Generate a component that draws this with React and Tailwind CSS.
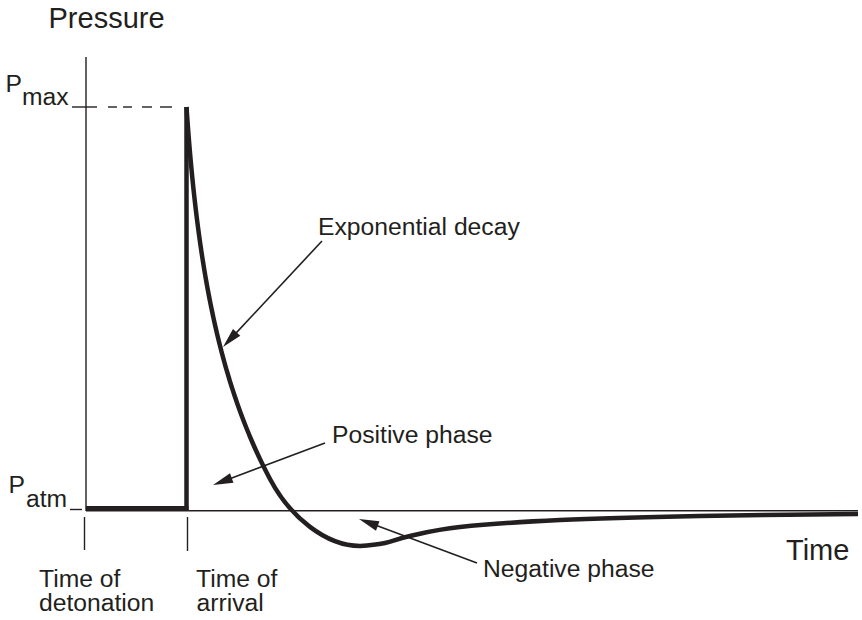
import React from "react";

const INK = "#231f20";

const K = 2.24;
const A = 101.5 / (Math.exp(K) - 1);
const decayX = (y) => 186.5 + A * (Math.exp((K * (y - 107)) / 403) - 1);

function catmullSegments(pts, before, after) {
  let d = "";
  for (let i = 0; i < pts.length - 1; i++) {
    const p0 = i === 0 ? before : pts[i - 1];
    const p1 = pts[i];
    const p2 = pts[i + 1];
    const p3 = i + 2 < pts.length ? pts[i + 2] : after;
    const c1 = [p1[0] + (p2[0] - p0[0]) / 6, p1[1] + (p2[1] - p0[1]) / 6];
    const c2 = [p2[0] - (p3[0] - p1[0]) / 6, p2[1] - (p3[1] - p1[1]) / 6];
    d += ` C${c1[0].toFixed(2)},${c1[1].toFixed(2)} ${c2[0].toFixed(2)},${c2[1].toFixed(2)} ${p2[0].toFixed(2)},${p2[1].toFixed(2)}`;
  }
  return d;
}

function buildCurve() {
  const decay = [];
  for (let y = 107; y <= 480; y += 8) decay.push([decayX(y), y]);
  if (decay[decay.length - 1][1] !== 480) decay.push([decayX(480), 480]);
  const start = decay[0];
  const end = decay[decay.length - 1];
  let d = `M${start[0].toFixed(2)},${start[1]}`;
  d += catmullSegments(decay, [decayX(99), 99], [decayX(488), 488]);
  // tangent at end of decay
  const slope = (decayX(481) - decayX(479)) / 2;
  const L = 42;
  const n = Math.hypot(slope, 1);
  const c1 = [end[0] + (slope / n) * L, end[1] + (1 / n) * L];
  d += ` C${c1[0].toFixed(2)},${c1[1].toFixed(2)} 326,546 360,546`;
  const tail = [
    [360, 546],
    [385, 543],
    [410, 536],
    [460, 527],
    [560, 520],
    [700, 516],
    [858, 514],
  ];
  d += catmullSegments(tail, [335, 546], [900, 513.5]);
  return d;
}

function Arrow({ from, to, len = 20, half = 5 }) {
  const dx = to[0] - from[0];
  const dy = to[1] - from[1];
  const L = Math.hypot(dx, dy);
  const ux = dx / L;
  const uy = dy / L;
  const bx = to[0] - ux * len;
  const by = to[1] - uy * len;
  const px = -uy;
  const py = ux;
  const pts = `${to[0]},${to[1]} ${bx + px * half},${by + py * half} ${bx - px * half},${by - py * half}`;
  return (
    <g>
      <line x1={from[0]} y1={from[1]} x2={bx + ux * 2} y2={by + uy * 2} stroke={INK} strokeWidth="1.6" />
      <polygon points={pts} fill={INK} />
    </g>
  );
}

function Label({ x, y, children }) {
  return (
    <text x={x} y={y} className="font-['Liberation_Sans',Arial,Helvetica,sans-serif] text-[24.7px] fill-[#231f20]">
      {children}
    </text>
  );
}

function Title({ x, y, children }) {
  return (
    <text x={x} y={y} className="font-['Liberation_Sans',Arial,Helvetica,sans-serif] text-[29px] fill-[#231f20]">
      {children}
    </text>
  );
}

export default function App() {
  const curve = buildCurve();
  return (
    <div className="w-[862px] h-[620px] bg-white overflow-hidden">
      <svg width="862" height="620" viewBox="0 0 862 620" className="block">
        {/* Axis titles */}
        <Title x="48.5" y="28">Pressure</Title>
        <Title x="786" y="560">Time</Title>

        {/* Y axis */}
        <line x1="86" y1="57" x2="86" y2="511" stroke={INK} strokeWidth="1.4" />
        {/* X axis */}
        <line x1="86" y1="510.7" x2="858" y2="510.7" stroke={INK} strokeWidth="1.4" />

        {/* Pmax tick and dashes */}
        <line x1="72" y1="107" x2="97" y2="107" stroke={INK} strokeWidth="1.4" />
        {[[108, 117], [123, 132], [142, 152], [160, 172]].map(([a, b], i) => (
          <line key={i} x1={a} y1="107" x2={b} y2="107" stroke={INK} strokeWidth="1.4" />
        ))}

        {/* Patm tick */}
        <line x1="70" y1="509.5" x2="82" y2="509.5" stroke={INK} strokeWidth="1.4" />

        {/* time ticks below axis */}
        <line x1="84.5" y1="517" x2="84.5" y2="550" stroke={INK} strokeWidth="1.4" />
        <line x1="187.5" y1="517" x2="187.5" y2="551" stroke={INK} strokeWidth="1.4" />

        {/* Pressure trace */}
        <line x1="86" y1="508" x2="188.5" y2="508" stroke={INK} strokeWidth="4" />
        <line x1="186.5" y1="107" x2="186.5" y2="510" stroke={INK} strokeWidth="4.5" />
        <path d={curve} fill="none" stroke={INK} strokeWidth="4.5" strokeLinejoin="round" />

        {/* Labels */}
        <Label x="5.5" y="92">P</Label>
        <Label x="22" y="105">max</Label>
        <Label x="8.5" y="493">P</Label>
        <Label x="26" y="507">atm</Label>

        <Label x="39" y="587">Time of</Label>
        <Label x="39" y="611">detonation</Label>
        <Label x="196" y="587">Time of</Label>
        <Label x="196.5" y="611">arrival</Label>

        <Label x="318" y="235">Exponential decay</Label>
        <Label x="332" y="443">Positive phase</Label>
        <Label x="483" y="577">Negative phase</Label>

        {/* Arrows */}
        <Arrow from={[322, 241]} to={[223, 347]} />
        <Arrow from={[325, 443]} to={[213, 485]} />
        <Arrow from={[477, 563]} to={[359, 519]} />
      </svg>
    </div>
  );
}
